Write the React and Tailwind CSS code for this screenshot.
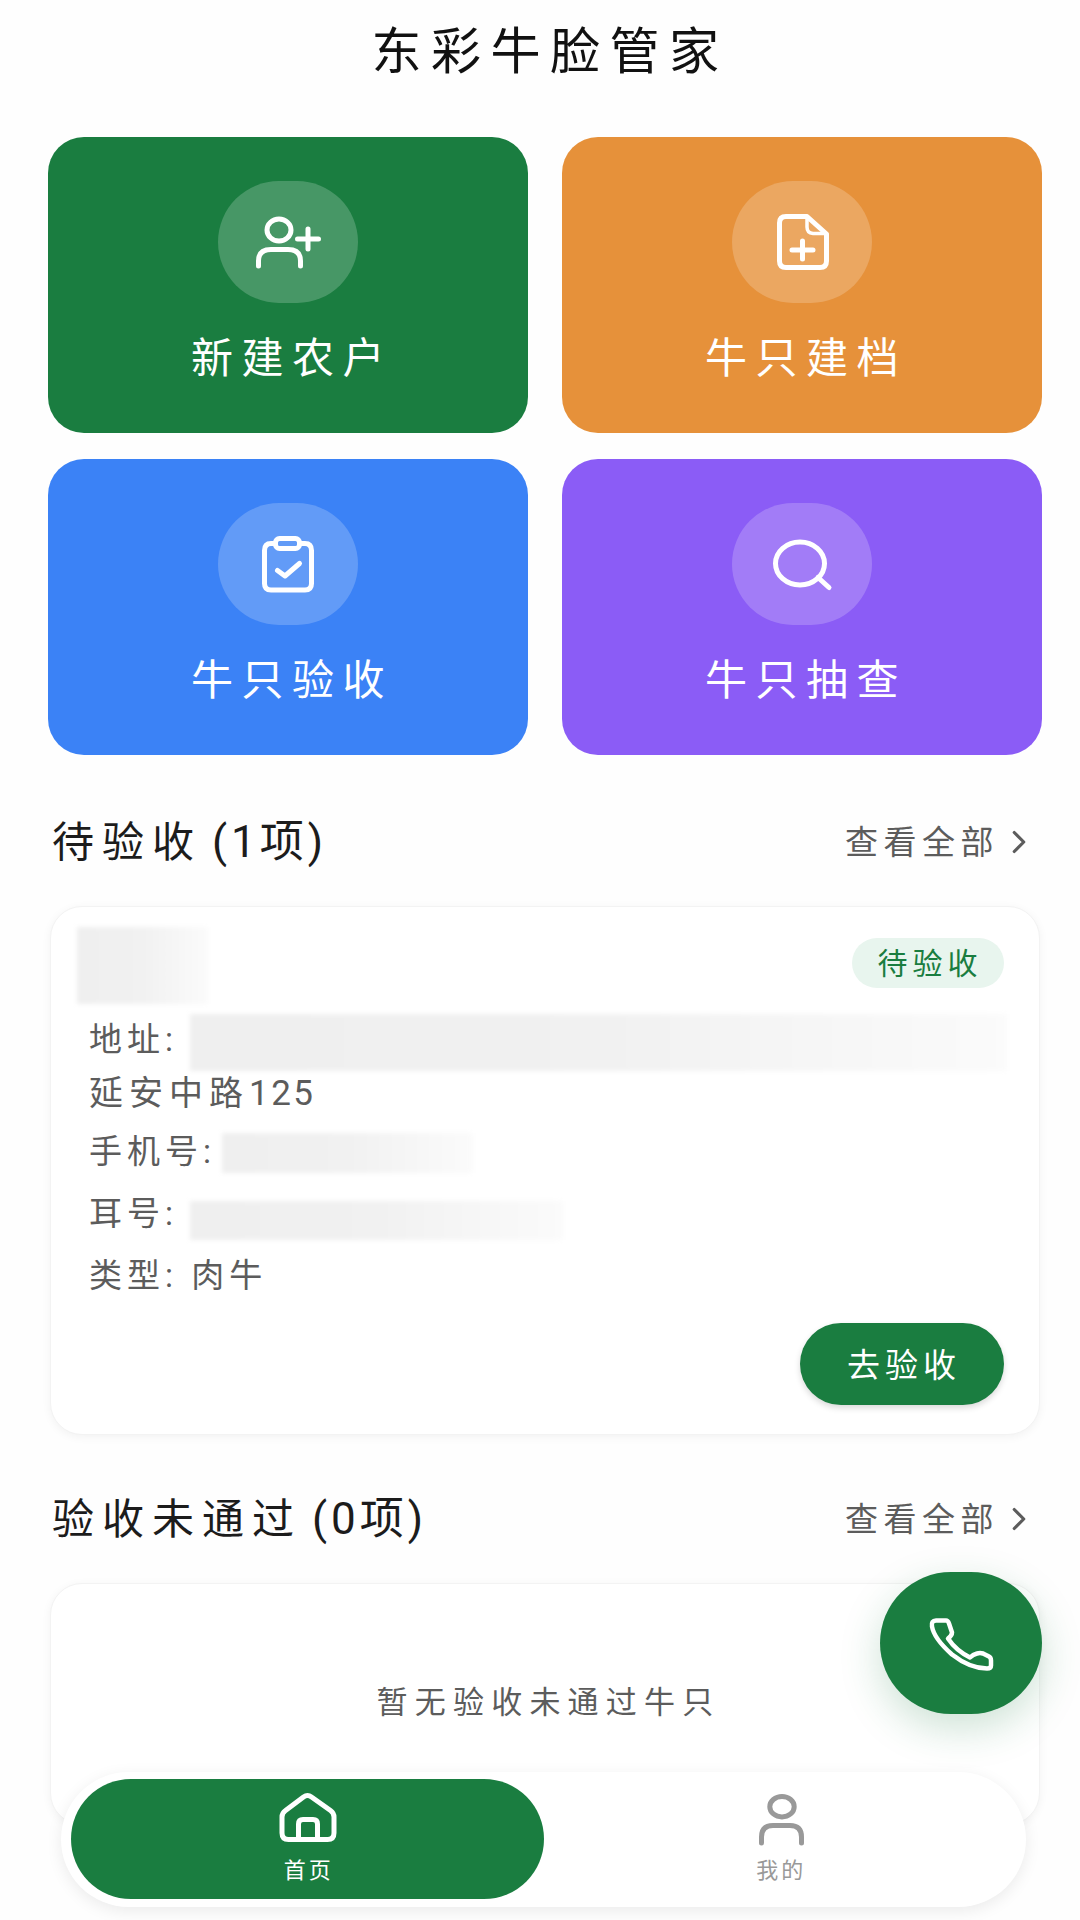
import { ChevronRight } from 'lucide-react';

const FONT = "font-['Roboto','Noto_Sans_CJK_SC',sans-serif]";

function Svg({ w, h, box, width = 5, children }) {
  return (
    <svg width={w} height={h} viewBox={box} fill="none" stroke="currentColor" strokeWidth={width} strokeLinecap="round" strokeLinejoin="round" className="shrink-0">
      {children}
    </svg>
  );
}

const UserPlusIcon = () => (
  <Svg w={110} h={90} box="3 -3 110 90">
    <ellipse cx="49" cy="30" rx="12" ry="11" />
    <path d="M28.5 66 V61 Q28.5 49.5 41 49.5 H58 Q70.5 49.5 70.5 61 V66" />
    <path d="M67.5 39 H88.5 M78 29 V49" />
  </Svg>
);

const FilePlusIcon = () => (
  <Svg w={110} h={90} box="-8 -3 110 90">
    <path d="M31 16.5 H52 L71.5 34 V61 Q71.5 67.5 65 67.5 H31 Q24.5 67.5 24.5 61 V23 Q24.5 16.5 31 16.5 Z" />
    <path d="M52 16.5 V27 Q52 33 58 33.5 H71.5" strokeWidth="3.5" />
    <path d="M37 50 H58 M47.5 41 V59" />
  </Svg>
);

const ClipboardIcon = () => (
  <Svg w={110} h={90} box="-12 -5.5 110 90">
    <path d="M30 19 H26 Q19.5 19 19.5 26 V59 Q19.5 65.5 26 65.5 H60 Q66.5 65.5 66.5 59 V26 Q66.5 19 60 19 H55" />
    <rect x="30.5" y="14" width="24" height="10" rx="4" />
    <path d="M32.5 46 L40 51.5 L54.5 39" />
  </Svg>
);

const SearchIcon = () => (
  <Svg w={110} h={90} box="-8 -5.5 110 90">
    <ellipse cx="45" cy="39" rx="24.5" ry="21.5" />
    <path d="M63 53 L74 63" />
  </Svg>
);

const PhoneIcon = () => (
  <Svg w={100} h={85} box="1 0.5 100 85" width={4.5}>
    <path d="M26 20 H36 Q38 20 39 23 L42 32 Q42 35 38 38 Q46 50 60 57 Q63 54 67 53 Q70 52 73 53 L79 56 Q81 57 81 60 V65 Q81 68 77 68 Q60 68 42 54 Q24 38 22 26 Q21 20 26 20 Z" />
  </Svg>
);

const HomeIcon = () => (
  <Svg w={100} h={80} box="-2.5 0 100 80">
    <path d="M22.5 37 Q22.5 33 26 30.5 L44 17 Q48 14 52 17 L71 30.5 Q74.5 33 74.5 37 V53 Q74.5 59.5 68 59.5 H29 Q22.5 59.5 22.5 53 Z" />
    <path d="M39 59 V44 Q39 39.5 43.5 39.5 H53.5 Q58 39.5 58 44 V59" />
  </Svg>
);

const UserIcon = () => (
  <Svg w={90} h={80} box="-5 0 90 80">
    <ellipse cx="42" cy="26.7" rx="12.2" ry="10.2" />
    <path d="M21.5 63 V57 Q21.5 45.5 33 45.5 H50 Q61.5 45.5 61.5 57 V63" />
  </Svg>
);

const actions = [
  { label: '新建农户', bg: 'bg-[#1a7d40]', Icon: UserPlusIcon },
  { label: '牛只建档', bg: 'bg-[#e6913a]', Icon: FilePlusIcon },
  { label: '牛只验收', bg: 'bg-[#3b82f6]', Icon: ClipboardIcon },
  { label: '牛只抽查', bg: 'bg-[#8b5cf6]', Icon: SearchIcon },
];

function SectionHeader({ title, count, className }) {
  return (
    <div className={`flex h-[60px] items-center justify-between pl-[52px] pr-[42px] pt-[2px] ${className}`}>
      <h2 className="text-[42px] font-normal leading-none tracking-[8px] text-[#1c1c1c]">
        {title}
        <span className="ml-[10px] text-[44px] tracking-[4px]">({count}项)</span>
      </h2>
      <div className="flex items-center text-[#5c5c5c]">
        <span className="text-[33px] leading-none tracking-[5.5px]">查看全部</span>
        <ChevronRight width={38} height={40} strokeWidth={2} className="ml-[1px]" />
      </div>
    </div>
  );
}

// размытые личные данные
function Smudge({ className }) {
  return <div className={`bg-linear-to-r from-[#efefef] via-[#f1f1f1] to-[#fbfbfb] blur-[2px] ${className}`} />;
}

export default function App() {
  return (
    <div className={`relative h-[1920px] overflow-hidden bg-[#fefefe] ${FONT}`}>
      {/* Заголовок */}
      <div className="flex h-[104px] items-center justify-center">
        <h1 className="pl-[20px] text-[50px] font-normal leading-none tracking-[9.5px] text-[#111]">东彩牛脸管家</h1>
      </div>

      {/* Быстрые действия */}
      <div className="ml-[48px] mr-[38px] mt-[33px] grid grid-cols-2 gap-x-[34px] gap-y-[26px]">
        {actions.map(({ label, bg, Icon }) => (
          <div key={label} className={`flex h-[296px] flex-col items-center rounded-[36px] pt-[44px] ${bg}`}>
            <div className="flex h-[122px] w-[140px] items-center justify-center rounded-full bg-white/20 text-white">
              <Icon />
            </div>
            <div className="mt-[31px] pl-[8px] text-[42px] leading-[50px] tracking-[8.5px] text-white">{label}</div>
          </div>
        ))}
      </div>

      <SectionHeader title="待验收" count={1} className="mt-[56px]" />

      {/* Карточка ожидающего приёмки */}
      <div className="ml-[50px] mr-[40px] mt-[35px] h-[529px] rounded-[32px] border border-[#f3f3f3] bg-white pl-[38px] pr-[35px] pt-[20px] text-[#5c5c5c] shadow-[0_2px_10px_rgba(0,0,0,0.05)]">
        <div className="-ml-[12px] flex items-start justify-between">
          <Smudge className="h-[77px] w-[131px]" />
          <div className="mt-[11px] flex h-[50px] w-[152px] items-center justify-center rounded-full bg-[#e8f5ee] pl-[4px] text-[30px] tracking-[5px] text-[#1a7d40]">待验收</div>
        </div>
        <div className="mt-[7px] text-[34px] leading-[54px] tracking-[6px]">
          <div className="flex h-[54px] items-center">
            <span className="mt-[4px] w-[101px] shrink-0 text-[33px] tracking-[5px]">地址:</span>
            <Smudge className="mt-[8px] h-[57px] w-[817px] shrink-0" />
          </div>
          <div className="mt-[1px]">延安中路<span className="text-[35px] tracking-[2.5px]">125</span></div>
        </div>
        <div className="mt-[5px] flex h-[50px] items-center text-[33px] tracking-[5px]">
          <span className="mt-[2px] w-[133px] shrink-0">手机号:</span>
          <Smudge className="mt-[4px] h-[40px] w-[251px]" />
        </div>
        <div className="mt-[11px] flex h-[50px] items-center text-[33px] tracking-[5px]">
          <span className="mt-[4px] w-[101px] shrink-0">耳号:</span>
          <Smudge className="mt-[17px] h-[39px] w-[373px]" />
        </div>
        <div className="mt-[14px] h-[50px] text-[33px] leading-[50px] tracking-[5px]">类型: 肉牛</div>
        <div className="mt-[22px] flex justify-end">
          <div className="flex h-[82px] w-[204px] items-center justify-center rounded-full bg-[#1a7d40] pl-[4px] pt-[3px] text-[33px] tracking-[5px] text-white shadow-[0_3px_6px_rgba(0,0,0,0.15)]">去验收</div>
        </div>
      </div>

      <SectionHeader title="验收未通过" count={0} className="mt-[53px]" />

      {/* Пустой список */}
      <div className="ml-[50px] mr-[40px] mt-[35px] flex h-[242px] items-center justify-center rounded-[32px] border border-[#f3f3f3] bg-white pb-[2px] pl-[7px] text-[31px] tracking-[7.2px] text-[#5c5c5c] shadow-[0_2px_10px_rgba(0,0,0,0.05)]">
        暂无验收未通过牛只
      </div>

      {/* Кнопка звонка */}
      <div className="absolute left-[880px] top-[1572px] flex h-[142px] w-[162px] items-center justify-center rounded-full bg-[#1a7d40] text-white shadow-[0_14px_40px_rgba(26,125,64,0.22)]">
        <PhoneIcon />
      </div>

      {/* Нижняя навигация */}
      <div className="absolute left-[61px] top-[1772px] flex h-[135px] w-[965px] rounded-full bg-white px-[10px] pb-[8px] pt-[7px] shadow-[0_4px_16px_rgba(0,0,0,0.08)]">
        <div className="flex flex-1 flex-col items-center rounded-full bg-[#1a7d40] pt-[1px] text-white">
          <HomeIcon />
          <span className="-mt-[3px] pl-[3px] text-[22px] leading-[28px] tracking-[3px]">首页</span>
        </div>
        <div className="flex flex-1 flex-col items-center pt-[1px] text-[#999]">
          <UserIcon />
          <span className="-mt-[3px] pl-[3px] text-[22px] leading-[28px] tracking-[3px]">我的</span>
        </div>
      </div>
    </div>
  );
}
